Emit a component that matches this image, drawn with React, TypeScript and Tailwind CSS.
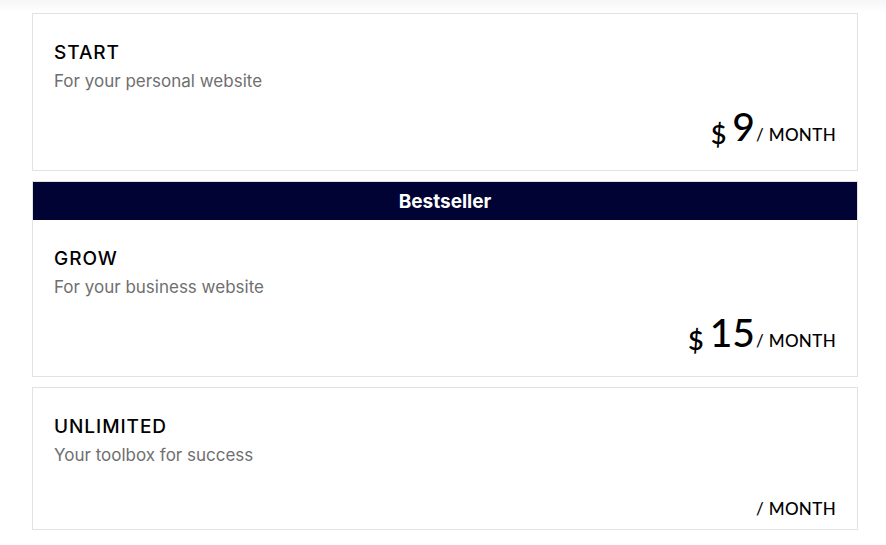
import React from "react";

type Plan = {
  title: string;
  desc: string;
  price?: string;
  badge?: string;
};

const plans: Plan[] = [
  { title: "START", desc: "For your personal website", price: "9" },
  { title: "GROW", desc: "For your business website", price: "15", badge: "Bestseller" },
  { title: "UNLIMITED", desc: "Your toolbox for success" },
];

function Card({ plan }: { plan: Plan }) {
  return (
    <div className="border border-[#e2e2e2] bg-white w-[826px]">
      {plan.badge && (
        <div className="h-[38px] pt-[2px] bg-[#000333] flex items-center justify-center text-white text-[19px] font-bold font-['Inter',sans-serif]">
          {plan.badge}
        </div>
      )}
      <div className={`px-[21px] pt-[27px] ${plan.price ? "pb-[23px]" : "pb-[8px]"}`}>
        <div className="font-['Inter',sans-serif] text-[19px] leading-[24px] font-medium tracking-[0.05em] text-black">
          {plan.title}
        </div>
        <div className="mt-[4px] font-['Inter',sans-serif] text-[17px] leading-[24px] text-[#6f6f6f]">
          {plan.desc}
        </div>
        <div
          className={`flex justify-end items-baseline font-['Lato',sans-serif] text-black ${
            plan.price ? "mt-[21px]" : "mt-[30px]"
          }`}
        >
          {plan.price && (
            <>
              <span className="text-[27px] leading-[24px] font-semibold mr-[6px] relative top-[3px]">$</span>
              <span className="text-[39px] leading-[24px] font-medium">{plan.price}</span>
            </>
          )}
          <span className="text-[17px] leading-[24px] font-medium tracking-[0.02em] ml-[1px]">/ MONTH</span>
        </div>
      </div>
    </div>
  );
}

export default function App() {
  return (
    <div className="w-[886px] h-[545px] bg-white overflow-hidden">
      <div className="h-[13px] bg-gradient-to-b from-[#f6f6f6] to-white" />
      <div className="pl-[32px] flex flex-col gap-[10px]">
        {plans.map((p) => (
          <Card key={p.title} plan={p} />
        ))}
      </div>
    </div>
  );
}
